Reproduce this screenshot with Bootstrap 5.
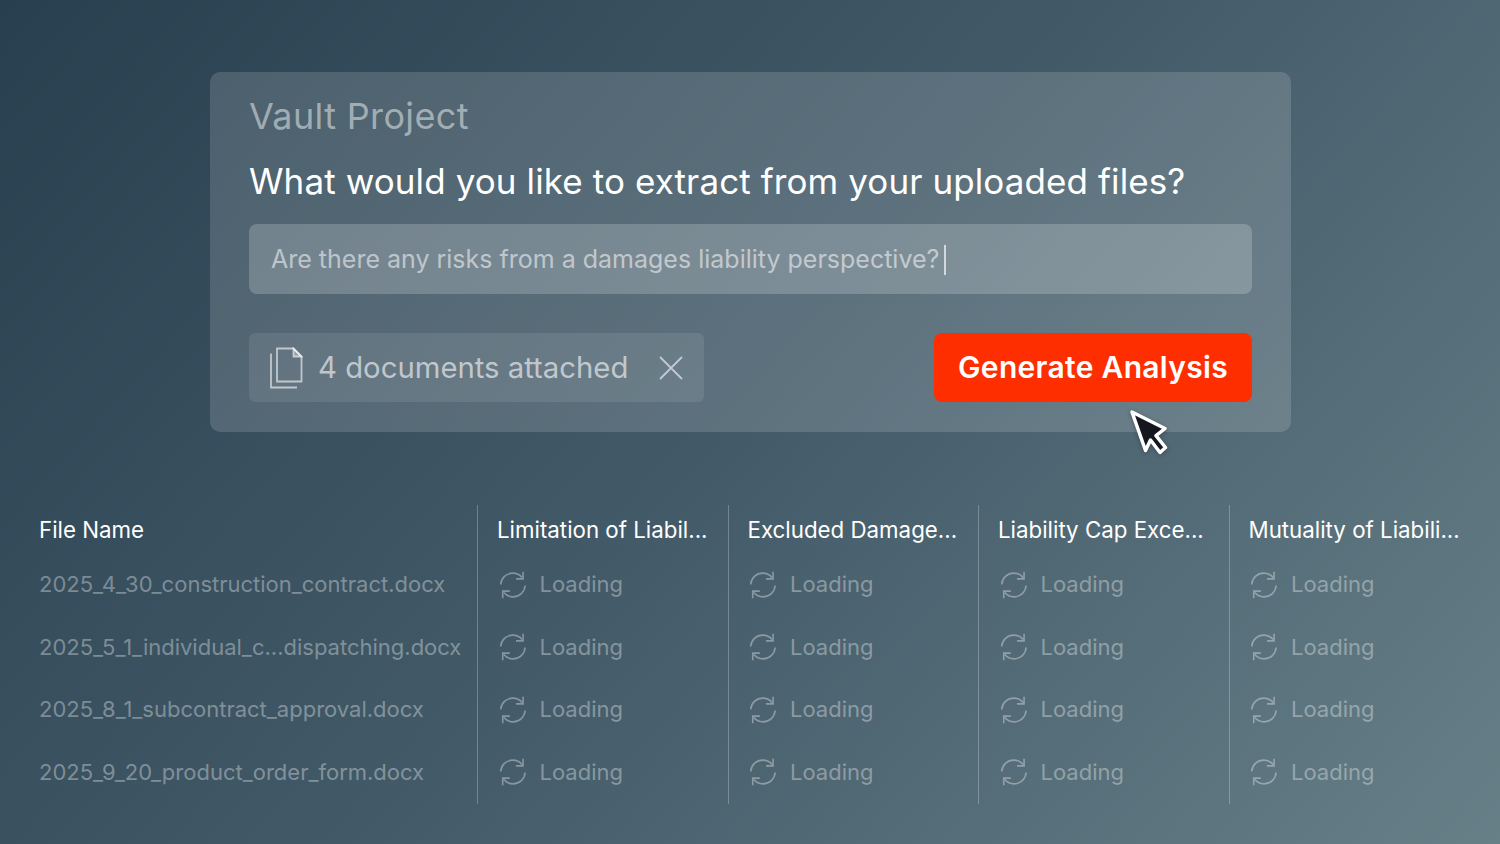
<!DOCTYPE html>
<html lang="en">
<head>
  <meta charset="UTF-8">
  <meta name="viewport" content="width=device-width, initial-scale=1.0">
  <title>Vault Project</title>
  <link rel="stylesheet" href="https://cdn.jsdelivr.net/npm/bootstrap@5.3.0/dist/css/bootstrap.min.css">
  <style>
    html, body { height: 100%; }
    body {
      width: 1500px; height: 844px; overflow: hidden;
      font-family: "Inter", "Liberation Sans", sans-serif;
      background: linear-gradient(132deg, #283f4f 0%, #435b69 50%, #677f87 100%);
    }
    .vault-panel {
      position: relative; width: 1081px; height: 360px; margin: 72px 0 0 210px;
      padding: 22px 39px 0; border-radius: 10px; background: rgba(255,255,255,.145);
    }
    .vault-title { font-size: 36px; line-height: 44px; color: rgba(255,255,255,.48); letter-spacing: .35px; }
    .vault-question { font-size: 35px; line-height: 44px; margin: 21px 0 21px; color: #fff; font-weight: 400; letter-spacing: .1px; }
    .vault-input {
      height: 70px; padding: 2px 0 0 22px; border-radius: 8px; font-size: 25px;
      background: rgba(255,255,255,.2); color: rgba(255,255,255,.55);
    }
    .caret-line { width: 1.5px; height: 30px; margin-left: 5px; background: rgba(255,255,255,.65); }
    .attach-row { margin-top: 39px; height: 69px; }
    .attach-box {
      width: 455px; height: 69px; padding-left: 20px; border-radius: 6px; font-size: 29.3px;
      background: rgba(255,255,255,.09); color: rgba(255,255,255,.6);
    }
    .attach-label { margin-left: 15px; }
    .attach-close { margin-left: auto; margin-right: 20px; }
    .gen-btn {
      width: 318px; height: 69px; border: 0; border-radius: 8px; padding: 0;
      background: #ff2e00; color: #fff; font-size: 30px; font-weight: 600; letter-spacing: .3px;
    }
    .gen-btn:hover { background: #ff2e00; color: #fff; }
    .cursor-mark { position: absolute; left: 917px; top: 336px; filter: drop-shadow(0 1px 2px rgba(0,0,0,.3)); }
    .file-grid {
      display: grid; grid-template-columns: 477px repeat(4, 250.5px);
      margin-top: 73px; height: 298px;
    }
    .file-col { display: flex; flex-direction: column; padding-left: 19px; border-left: 1px solid rgba(255,255,255,.25); }
    .file-col:first-child { padding-left: 39px; border-left: 0; }
    .col-head { height: 48.5px; padding-top: 10px; font-size: 22.3px; line-height: 30px; color: #fff; white-space: nowrap; }
    .col-cell { display: flex; align-items: center; gap: 13px; height: 62.5px; font-size: 22px; color: rgba(255,255,255,.36); white-space: nowrap; }
    .col-cell svg { margin-left: 1.5px; }
  </style>
</head>
<body>
  <svg width="0" height="0" class="d-block">
    <symbol id="spin" viewBox="0 0 30 30">
      <path d="M1.800 14.500C2.300 7.500 7.800 2.300 14.800 2.300c4 0 7.400 1.600 9.800 4.600" fill="none" stroke="currentColor" stroke-width="1.700"/>
      <path d="M28 15.500C27.500 22.500 22 27.700 15 27.700c-4 0-7.400-1.600-9.800-4.600" fill="none" stroke="currentColor" stroke-width="1.700"/>
      <path d="M25.800 .8v7.600h-7.600" fill="none" stroke="currentColor" stroke-width="1.700"/>
      <path d="M4 29.200v-7.600h7.600" fill="none" stroke="currentColor" stroke-width="1.700"/>
    </symbol>
  </svg>

  <div class="vault-panel">
    <div class="vault-title">Vault Project</div>
    <h1 class="vault-question">What would you like to extract from your uploaded files?</h1>
    <div class="vault-input d-flex align-items-center">
      <span>Are there any risks from a damages liability perspective?</span><span class="caret-line"></span>
    </div>
    <div class="attach-row d-flex justify-content-between">
      <div class="attach-box d-flex align-items-center">
        <svg width="34" height="42" viewBox="0 0 34 42" fill="none" stroke="currentColor" stroke-width="1.800">
          <path d="M8 1.500h16.500l8 8v25H8z"/>
          <path d="M24.500 1.500v8h8z" fill="currentColor" fill-opacity=".5"/>
          <path d="M2 6.500v34h26"/>
        </svg>
        <span class="attach-label">4 documents attached</span>
        <svg class="attach-close" width="26" height="26" viewBox="0 0 26 26" fill="none" stroke="currentColor" stroke-width="1.800"><path d="M2 2l22 22M24 2L2 24"/></svg>
      </div>
      <button class="btn gen-btn" type="button">Generate Analysis</button>
    </div>
    <svg class="cursor-mark" width="46" height="52" viewBox="0 0 46 52">
      <path d="M5 4l13.500 38.500 5-10.500 9.500 12.500 5.500-5-9.500-11.800 9-7.200z" fill="#14171f" stroke="#fff" stroke-width="3.500" stroke-linejoin="round"/>
    </svg>
  </div>

  <div class="file-grid">
    <div class="file-col">
      <div class="col-head">File Name</div>
      <div class="col-cell">2025_4_30_construction_contract.docx</div>
      <div class="col-cell">2025_5_1_individual_c...dispatching.docx</div>
      <div class="col-cell">2025_8_1_subcontract_approval.docx</div>
      <div class="col-cell">2025_9_20_product_order_form.docx</div>
    </div>
    <div class="file-col">
      <div class="col-head">Limitation of Liabil...</div>
      <div class="col-cell"><svg width="28" height="28"><use href="#spin"/></svg>Loading</div>
      <div class="col-cell"><svg width="28" height="28"><use href="#spin"/></svg>Loading</div>
      <div class="col-cell"><svg width="28" height="28"><use href="#spin"/></svg>Loading</div>
      <div class="col-cell"><svg width="28" height="28"><use href="#spin"/></svg>Loading</div>
    </div>
    <div class="file-col">
      <div class="col-head">Excluded Damage...</div>
      <div class="col-cell"><svg width="28" height="28"><use href="#spin"/></svg>Loading</div>
      <div class="col-cell"><svg width="28" height="28"><use href="#spin"/></svg>Loading</div>
      <div class="col-cell"><svg width="28" height="28"><use href="#spin"/></svg>Loading</div>
      <div class="col-cell"><svg width="28" height="28"><use href="#spin"/></svg>Loading</div>
    </div>
    <div class="file-col">
      <div class="col-head">Liability Cap Exce...</div>
      <div class="col-cell"><svg width="28" height="28"><use href="#spin"/></svg>Loading</div>
      <div class="col-cell"><svg width="28" height="28"><use href="#spin"/></svg>Loading</div>
      <div class="col-cell"><svg width="28" height="28"><use href="#spin"/></svg>Loading</div>
      <div class="col-cell"><svg width="28" height="28"><use href="#spin"/></svg>Loading</div>
    </div>
    <div class="file-col">
      <div class="col-head">Mutuality of Liabili...</div>
      <div class="col-cell"><svg width="28" height="28"><use href="#spin"/></svg>Loading</div>
      <div class="col-cell"><svg width="28" height="28"><use href="#spin"/></svg>Loading</div>
      <div class="col-cell"><svg width="28" height="28"><use href="#spin"/></svg>Loading</div>
      <div class="col-cell"><svg width="28" height="28"><use href="#spin"/></svg>Loading</div>
    </div>
  </div>

  <script src="https://cdn.jsdelivr.net/npm/bootstrap@5.3.0/dist/js/bootstrap.bundle.min.js"></script>
</body>
</html>
